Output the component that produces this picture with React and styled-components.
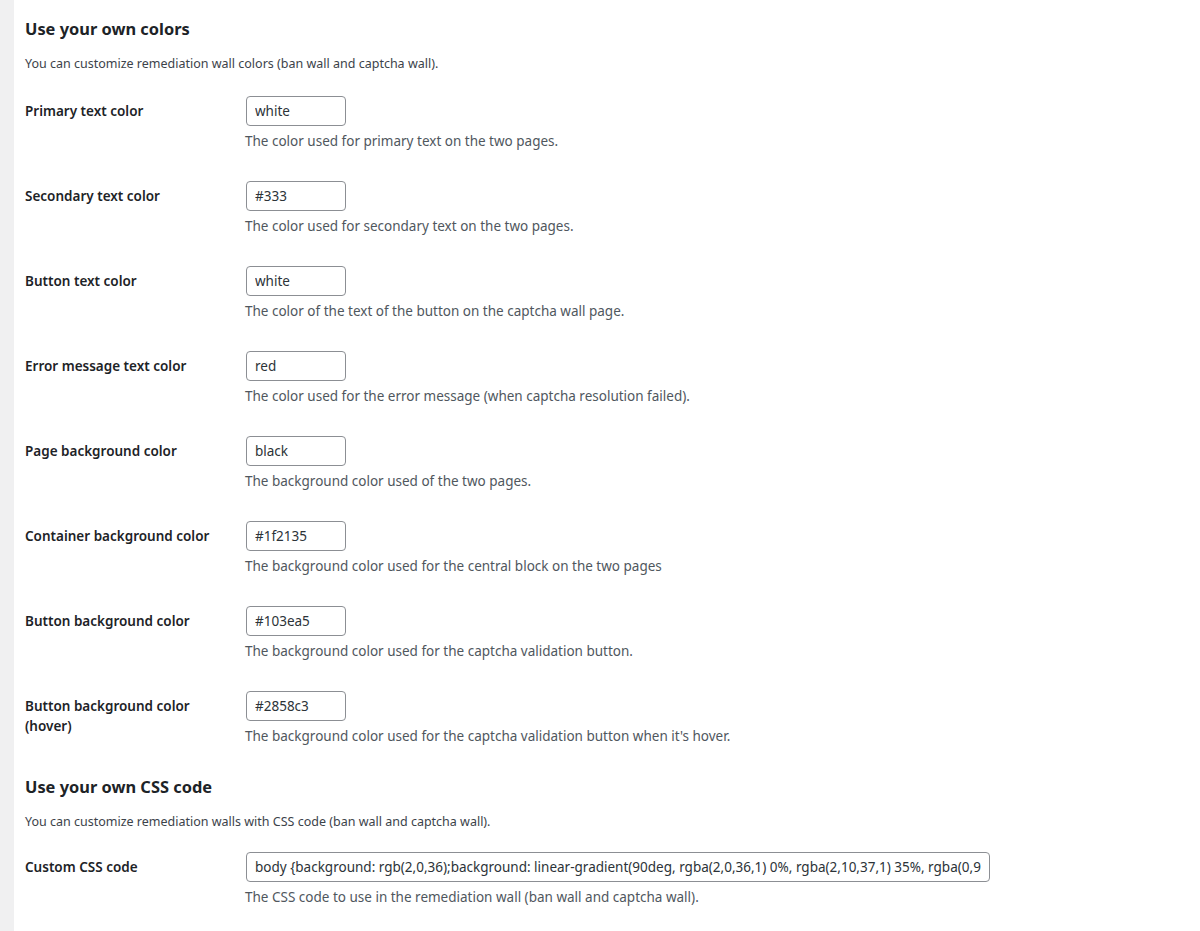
import styled, { createGlobalStyle } from "styled-components";

const GlobalStyle = createGlobalStyle`
  body {
    margin: 0;
    background: #fff;
    font-family: "Noto Sans", "Open Sans", sans-serif;
    color: #1d2327;
  }
`;

const Page = styled.div`
  display: flex;
  min-height: 100vh;
`;

const SideStrip = styled.div`
  width: 14px;
  flex-shrink: 0;
  background-color: #f0f0f1;
`;

const Content = styled.div`
  flex: 1;
  padding: 17px 11px 0 11px;
`;

const Heading = styled.h2`
  margin: ${(p) => (p.$first ? "0" : "14px")} 0 0;
  font-size: 16.4px;
  line-height: 24px;
  font-weight: 700;
  color: #1d2327;
`;

const Intro = styled.p`
  margin: 13px 0 0;
  font-size: 12.5px;
  line-height: 20px;
  color: #3c434a;
`;

const Table = styled.div`
  display: flex;
  flex-direction: column;
  margin-top: ${(p) => p.$gap}px;
`;

const Row = styled.div`
  display: grid;
  grid-template-columns: 220px 1fr;
  height: 85px;
`;

const Label = styled.div`
  padding: 20px 24px 0 0;
  font-size: 13.5px;
  line-height: 20px;
  font-weight: 600;
  color: #1d2327;
`;

const Field = styled.div`
  padding-top: 15px;
  display: flex;
  flex-direction: column;
  align-items: flex-start;
`;

const TextInput = styled.input`
  box-sizing: border-box;
  width: ${(p) => p.$width}px;
  height: 30px;
  margin: 0 0 0 1px;
  padding: 0 8px;
  border: 1px solid #8c8f94;
  border-radius: 4px;
  background: #fff;
  font-family: inherit;
  font-size: 13.5px;
  color: #2c3338;
  outline: none;
`;

const Description = styled.p`
  margin: 5px 0 0;
  font-size: 13.5px;
  line-height: 21px;
  color: #50575e;
`;

const colorRows = [
  ["Primary text color", "white", "The color used for primary text on the two pages."],
  ["Secondary text color", "#333", "The color used for secondary text on the two pages."],
  ["Button text color", "white", "The color of the text of the button on the captcha wall page."],
  [
    "Error message text color",
    "red",
    "The color used for the error message (when captcha resolution failed).",
  ],
  ["Page background color", "black", "The background color used of the two pages."],
  [
    "Container background color",
    "#1f2135",
    "The background color used for the central block on the two pages",
  ],
  ["Button background color", "#103ea5", "The background color used for the captcha validation button."],
  [
    "Button background color (hover)",
    "#2858c3",
    "The background color used for the captcha validation button when it's hover.",
  ],
];

const cssValue =
  "body {background: rgb(2,0,36);background: linear-gradient(90deg, rgba(2,0,36,1) 0%, rgba(2,10,37,1) 35%, rgba(0,9,121,1) 100%);}";

function SettingRow({ label, value, description, width = 100 }) {
  return (
    <Row>
      <Label>{label}</Label>
      <Field>
        <TextInput type="text" defaultValue={value} $width={width} />
        <Description>{description}</Description>
      </Field>
    </Row>
  );
}

export default function App() {
  return (
    <Page>
      <GlobalStyle />
      <SideStrip />
      <Content>
        <Heading $first>Use your own colors</Heading>
        <Intro>You can customize remediation wall colors (ban wall and captcha wall).</Intro>
        <Table $gap={7}>
          {colorRows.map(([label, value, description]) => (
            <SettingRow key={label} label={label} value={value} description={description} />
          ))}
        </Table>

        <Heading>Use your own CSS code</Heading>
        <Intro>You can customize remediation walls with CSS code (ban wall and captcha wall).</Intro>
        <Table $gap={5}>
          <SettingRow
            label="Custom CSS code"
            value={cssValue}
            width={744}
            description="The CSS code to use in the remediation wall (ban wall and captcha wall)."
          />
        </Table>
      </Content>
    </Page>
  );
}
